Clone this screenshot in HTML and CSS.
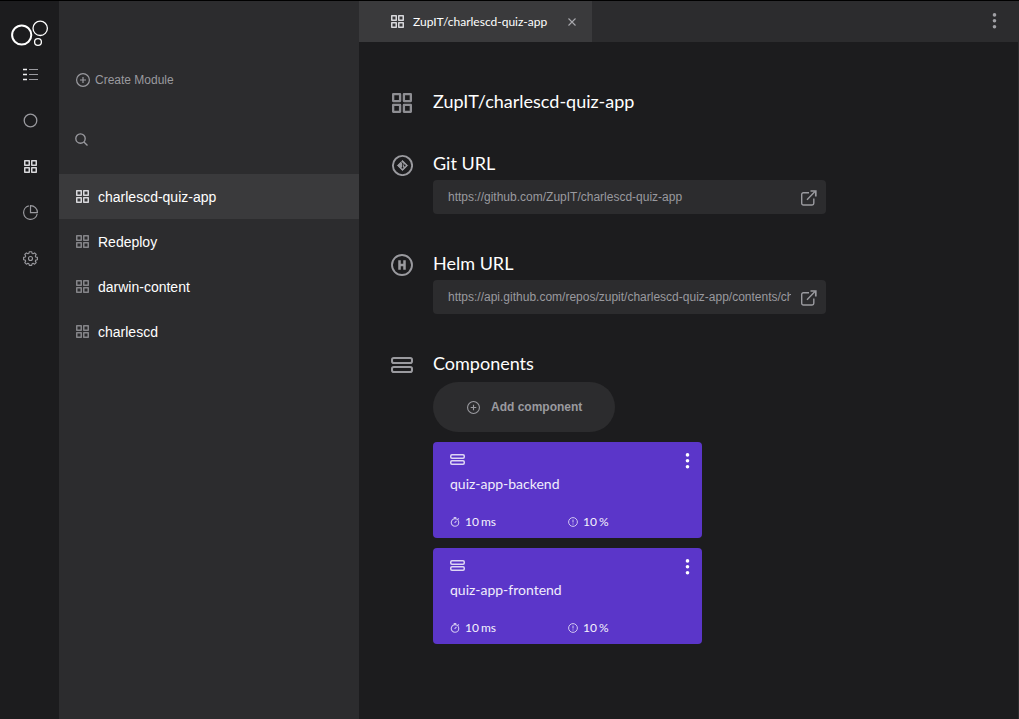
FILE: index.html
```html
<!DOCTYPE html>
<html lang="en">
<head>
<meta charset="utf-8">
<title>Modules</title>
<link rel="stylesheet" href="styles.css">
</head>
<body>
<svg class="sprite" aria-hidden="true">
  <symbol id="modules" viewBox="0 0 13 13">
    <path d="M.75.75h4.500v4.500H.75zM7.750.75h4.500v4.500h-4.500zM.75 7.750h4.500v4.500H.75zM7.750 7.750h4.500v4.500h-4.500z" fill="none" stroke="currentColor" stroke-width="1.500" stroke-linejoin="round"/>
  </symbol>
  <symbol id="plus" viewBox="0 0 14 14">
    <path d="M7 .6a6.400 6.400 0 1 0 0 12.800A6.400 6.400 0 0 0 7 .6zM7 4v6M4 7h6" fill="none" stroke="currentColor" stroke-width="1.200"/>
  </symbol>
  <symbol id="external" viewBox="0 0 16 16">
    <path d="M8 2.700H2.400A1.700 1.700 0 0 0 .7 4.400V13.300a1.700 1.700 0 0 0 1.700 1.700h8.700a1.700 1.700 0 0 0 1.700-1.700V8.500M6 9.800L14 1.500" fill="none" stroke="currentColor" stroke-width="1.400"/>
    <path d="M9.500 1h5.300v5.500" fill="none" stroke="currentColor" stroke-width="1.700"/>
  </symbol>
  <symbol id="component" viewBox="0 0 22 16">
    <rect x="1" y="1" width="20" height="5" rx="1.800" fill="none" stroke="currentColor" stroke-width="2"/>
    <rect x="1" y="10" width="20" height="5" rx="1.800" fill="none" stroke="currentColor" stroke-width="2"/>
  </symbol>
  <symbol id="component-small" viewBox="0 0 15 11">
    <rect x=".75" y=".75" width="13.500" height="3.500" rx="1.200" fill="none" stroke="currentColor" stroke-width="1.500"/>
    <rect x=".75" y="6.750" width="13.500" height="3.500" rx="1.200" fill="none" stroke="currentColor" stroke-width="1.500"/>
  </symbol>
  <symbol id="dots" viewBox="0 0 5 16">
    <circle cx="2.500" cy="1.900" r="1.800" fill="currentColor"/><circle cx="2.500" cy="7.800" r="1.800" fill="currentColor"/><circle cx="2.500" cy="13.700" r="1.800" fill="currentColor"/>
  </symbol>
  <symbol id="timer" viewBox="0 0 10 10">
    <path d="M5 1.700a3.700 3.700 0 1 0 0 7.500 3.700 3.700 0 0 0 0-7.500zM3.700.6h2.600M7.800 2.300l1-1M4.600 5.800l1.900-1.900" fill="none" stroke="currentColor" stroke-width="1.100"/>
  </symbol>
  <symbol id="alert" viewBox="0 0 10 10">
    <path d="M5 .6a4.400 4.400 0 1 0 0 8.800A4.400 4.400 0 0 0 5 .6zM5 2.600v2.900M5 6.500v1" fill="none" stroke="currentColor" stroke-width="1"/>
  </symbol>
</svg>

<div class="app">
  <nav class="rail">
    <svg class="logo" viewBox="0 0 38 28">
      <circle cx="10.700" cy="16" r="9.600" stroke-width="2"/><circle cx="29.200" cy="9.300" r="7.200" stroke-width="1.300"/><circle cx="27" cy="23" r="3.400" stroke-width="1.300"/>
    </svg>
    <a class="rail-item"><svg class="icon15" viewBox="0 0 15 11"><path d="M0 .5h4M0 5.500h4M0 10.500h4" stroke="#f0f0f2" stroke-width="1.300"/><path d="M6 .5h9M6 5.500h9M6 10.500h9" stroke="currentColor" stroke-width="1.200"/></svg></a>
    <a class="rail-item"><svg class="icon15" viewBox="0 0 15 15"><circle cx="7.500" cy="7.500" r="6.300" fill="none" stroke="currentColor" stroke-width="1.300"/></svg></a>
    <a class="rail-item active"><svg class="icon13"><use href="#modules"/></svg></a>
    <a class="rail-item"><svg class="icon15" viewBox="0 0 15 15"><path d="M5.800.8A6.900 6.900 0 1 0 14.200 9.200M7.500.6v7h6.900A6.900 6.900 0 0 0 7.500.6z" fill="none" stroke="currentColor" stroke-width="1.200"/></svg></a>
    <a class="rail-item"><svg class="icon15" viewBox="0 0 15 15"><path d="M6.300.7h2.400l.4 1.700 1 .4 1.500-.9 1.600 1.600-.9 1.500.4 1 1.700.4v2.300l-1.700.4-.4 1 .9 1.500-1.600 1.600-1.500-.9-1 .4-.4 1.700H6.300l-.4-1.700-1-.4-1.500.9-1.600-1.600.9-1.500-.4-1-1.700-.4V6.400L2.300 6l.4-1-.9-1.500 1.600-1.600 1.500.9 1-.4z" fill="none" stroke="currentColor" stroke-width="1.100" stroke-linejoin="round"/><circle cx="7.500" cy="7.500" r="2" fill="none" stroke="currentColor" stroke-width="1.100"/></svg></a>
  </nav>

  <aside class="sidebar">
    <button class="create"><svg class="icon14"><use href="#plus"/></svg>Create Module</button>
    <div class="search"><svg class="icon13" viewBox="0 0 13 13"><path d="M5.500.8a4.700 4.700 0 1 0 0 9.400 4.700 4.700 0 0 0 0-9.400zM8.900 8.900l3.600 3.600" fill="none" stroke="currentColor" stroke-width="1.350"/></svg></div>
    <ul class="modules">
      <li class="module selected"><svg class="icon13"><use href="#modules"/></svg>charlescd-quiz-app</li>
      <li class="module"><svg class="icon13"><use href="#modules"/></svg>Redeploy</li>
      <li class="module"><svg class="icon13"><use href="#modules"/></svg>darwin-content</li>
      <li class="module"><svg class="icon13"><use href="#modules"/></svg>charlescd</li>
    </ul>
  </aside>

  <main class="main">
    <header class="tabs">
      <div class="tab"><svg class="icon13"><use href="#modules"/></svg><span class="tab-name">ZupIT/charlescd-quiz-app</span><svg class="close" viewBox="0 0 8 8"><path d="M.5.5l7 7M7.500.5l-7 7" stroke="currentColor" stroke-width="1.100"/></svg></div>
      <svg class="dots"><use href="#dots"/></svg>
    </header>
    <div class="content">
      <section class="row title-row">
        <svg class="title-icon"><use href="#modules"/></svg>
        <h1 class="heading">ZupIT/charlescd-quiz-app</h1>
      </section>
      <section class="row url-row">
        <svg class="round-icon" viewBox="0 0 22 22"><circle cx="11.500" cy="11.500" r="9.600" fill="none" stroke="currentColor" stroke-width="1.900"/><path d="M11.500 6.400L16.600 11.500 11.500 16.600 6.400 11.500z" fill="currentColor" stroke="currentColor" stroke-linejoin="round"/><path d="M9.700 7.200L13.500 11.200M11.500 9v5" stroke="#1c1c1e" stroke-width=".8"/><circle cx="11.500" cy="13.700" r=".9" fill="#1c1c1e"/><circle cx="13.700" cy="11.500" r=".9" fill="#1c1c1e"/></svg>
        <div class="body">
          <h2 class="heading">Git URL</h2>
          <div class="field"><span class="url">https://github.com/ZupIT/charlescd-quiz-app</span><svg class="external"><use href="#external"/></svg></div>
        </div>
      </section>
      <section class="row url-row">
        <svg class="round-icon" viewBox="0 0 22 22"><circle cx="11" cy="11" r="10" fill="none" stroke="currentColor" stroke-width="1.900"/><path d="M8.500 6.200v9.600M13.500 6.200v9.600M8 11h6" stroke="currentColor" stroke-width="2.500"/></svg>
        <div class="body">
          <h2 class="heading">Helm URL</h2>
          <div class="field"><span class="url">https://api.github.com/repos/zupit/charlescd-quiz-app/contents/charlescd-quiz-app</span><svg class="external"><use href="#external"/></svg></div>
        </div>
      </section>
      <section class="row">
        <svg class="component-icon"><use href="#component"/></svg>
        <div class="body">
          <h2 class="heading">Components</h2>
          <button class="add"><svg class="icon13"><use href="#plus"/></svg>Add component</button>
          <article class="card">
            <div class="card-top"><svg class="card-icon"><use href="#component-small"/></svg><svg class="card-dots"><use href="#dots"/></svg></div>
            <h3 class="card-name">quiz-app-backend</h3>
            <div class="stats"><span class="stat"><svg class="icon10"><use href="#timer"/></svg>10 ms</span><span class="stat"><svg class="icon10"><use href="#alert"/></svg>10 %</span></div>
          </article>
          <article class="card">
            <div class="card-top"><svg class="card-icon"><use href="#component-small"/></svg><svg class="card-dots"><use href="#dots"/></svg></div>
            <h3 class="card-name">quiz-app-frontend</h3>
            <div class="stats"><span class="stat"><svg class="icon10"><use href="#timer"/></svg>10 ms</span><span class="stat"><svg class="icon10"><use href="#alert"/></svg>10 %</span></div>
          </article>
        </div>
      </section>
    </div>
  </main>
</div>
</body>
</html>
```
FILE: styles.css
```css
* { box-sizing: border-box; }
body { margin: 0; background: #1c1c1e; color: #fff; font-family: "Liberation Sans", Arial, sans-serif; overflow: hidden; }
h1, h2, h3, ul { margin: 0; padding: 0; font-weight: 400; }
button { border: 0; padding: 0; background: none; font-family: inherit; color: inherit; }
svg { display: block; flex: none; }
.sprite { display: none; }
.app { display: flex; height: 719px; border-top: 1px solid #000; }

.icon10 { width: 10px; height: 10px; }
.icon13 { width: 13px; height: 13px; }
.icon14 { width: 14px; height: 14px; }
.icon15 { width: 15px; height: 15px; }

.rail { width: 59px; padding: 18px 0 0 0; color: #9a9a9f; }
.logo { width: 38px; height: 28px; margin: 0 0 4px 11px; fill: none; stroke: #fff; }
.rail-item { display: flex; align-items: center; justify-content: center; width: 61px; height: 46px; }
.rail-item.active { color: #d8d8dc; }

.sidebar { width: 300px; padding-top: 71px; background: #2c2c2e; color: #9a9a9f; }
.create { display: flex; align-items: center; gap: 5.5px; height: 15px; margin-left: 16.5px; font-size: 12px; }
.search { margin: 46px 0 28px 16px; height: 13px; }
.modules { list-style: none; }
.module { display: flex; align-items: center; gap: 9px; height: 45px; padding-left: 17px; font-size: 14px; color: #fff; }
.module .icon13 { color: #858589; }
.module.selected { background: #3a3a3c; }
.module.selected .icon13 { color: #d8d8dc; }

.main { flex: 1; min-width: 0; border-right: 1px solid #2c2c2e; }
.tabs { display: flex; align-items: center; justify-content: space-between; height: 41px; padding: 0 21px 2px 0; background: #2c2c2e; }
.tab { display: flex; align-items: center; width: 233px; height: 41px; margin-bottom: -2px; padding-left: 32px; background: #3a3a3c; color: #d8d8dc; }
.tab-name { width: 164px; padding-left: 9px; font: 12px/16px Lato, sans-serif; color: #fff; white-space: nowrap; }
.close { width: 8px; height: 8px; color: #a9a9ae; }
.dots { width: 5px; height: 16px; color: #a0a0a5; }

.content { padding: 47px 0 0 32px; }
.row { display: flex; align-items: flex-start; color: #9a9a9f; }
.title-row { height: 62px; }
.url-row { height: 100px; }
.title-icon { width: 20px; height: 20px; margin: 4px 21px 0 1px; color: #8e8e93; }
.round-icon { width: 22px; height: 22px; margin: 3px 20px 0 0; }
.component-icon { width: 22px; height: 16px; margin: 6px 20px 0 0; }
.heading { height: 29px; font: 18px/24px Lato, sans-serif; color: #fff; }
.field { display: flex; justify-content: space-between; width: 393px; height: 34px; padding: 10px 9px 0 15px; border-radius: 4px; background: #2c2c2e; }
.url { width: 343px; overflow: hidden; white-space: nowrap; font-size: 12px; line-height: 14px; }
.external { width: 16px; height: 16px; }
.add { display: flex; align-items: center; gap: 11px; width: 182px; height: 50px; margin-top: 2px; padding-left: 34px; border-radius: 25px; background: #2c2c2e; font-size: 12px; font-weight: 700; color: #9a9a9f; }
.card { width: 269px; height: 96px; margin-top: 10px; padding: 11px 12px 0 17px; border-radius: 4px; background: #5b36c9; color: #fff; }
.card-top { display: flex; justify-content: space-between; height: 21px; }
.card-icon { width: 15px; height: 11px; margin-top: 1px; opacity: .8; }
.card-dots { width: 5px; height: 16px; }
.card-name { font: 14px/20px Lato, sans-serif; color: #f0edfb; }
.stats { display: flex; margin-top: 20px; }
.stat { display: flex; align-items: center; gap: 5px; width: 118px; font: 12px/16px Lato, sans-serif; word-spacing: -1px; color: #f5f3fc; }
.stat .icon10 { color: #d0c6f0; }
```
